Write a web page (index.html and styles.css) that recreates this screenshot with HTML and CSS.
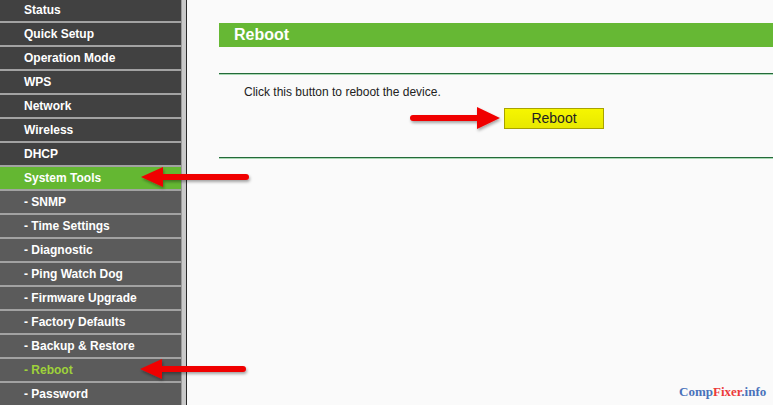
FILE: index.html
```html
<!DOCTYPE html>
<html>
<head>
<meta charset="utf-8">
<link rel="stylesheet" href="styles.css">
</head>
<body>
<div class="page">
  <nav class="sidebar">
    <ul class="menu">
      <li class="item main">Status</li>
      <li class="item main">Quick Setup</li>
      <li class="item main">Operation Mode</li>
      <li class="item main">WPS</li>
      <li class="item main">Network</li>
      <li class="item main">Wireless</li>
      <li class="item main">DHCP</li>
      <li class="item active">System Tools</li>
      <li class="item sub">- SNMP</li>
      <li class="item sub">- Time Settings</li>
      <li class="item sub">- Diagnostic</li>
      <li class="item sub">- Ping Watch Dog</li>
      <li class="item sub">- Firmware Upgrade</li>
      <li class="item sub">- Factory Defaults</li>
      <li class="item sub">- Backup &amp; Restore</li>
      <li class="item sub current">- Reboot</li>
      <li class="item sub">- Password</li>
    </ul>
    <div class="edge"></div>
  </nav>
  <main class="content">
    <div class="title-bar">Reboot</div>
    <div class="rule rule-top"></div>
    <p class="desc">Click this button to reboot the device.</p>
    <div class="btn-row"><button class="reboot-btn">Reboot</button></div>
    <div class="rule rule-bottom"></div>
  </main>
</div>

<svg class="arrow arrow-left arrow-1" width="120" height="34" viewBox="0 0 120 34">
  <defs>
    <filter id="sh" x="-20%" y="-40%" width="140%" height="180%">
      <feDropShadow dx="1" dy="2" stdDeviation="1.5" flood-color="#000" flood-opacity="0.35"/>
    </filter>
  </defs>
  <g filter="url(#sh)">
    <line x1="24" y1="15" x2="108" y2="15" stroke="#f00000" stroke-width="6" stroke-linecap="round"/>
    <polygon points="3,15 25,5 25,25" fill="#f00000"/>
  </g>
</svg>

<svg class="arrow arrow-left arrow-2" width="120" height="34" viewBox="0 0 120 34">
  <g filter="url(#sh)">
    <line x1="24" y1="15" x2="106" y2="15" stroke="#f00000" stroke-width="6" stroke-linecap="round"/>
    <polygon points="3,15 25,5 25,25" fill="#f00000"/>
  </g>
</svg>

<svg class="arrow arrow-3" width="100" height="36" viewBox="0 0 100 36">
  <g filter="url(#sh)">
    <line x1="6" y1="16" x2="72" y2="16" stroke="#f00000" stroke-width="6" stroke-linecap="round"/>
    <polygon points="93,16 70,5 70,27" fill="#f00000"/>
  </g>
</svg>

<div class="watermark"><span class="wm-blue">Comp</span><span class="wm-red">Fixer</span><span class="wm-blue">.info</span></div>
</body>
</html>
```

FILE: styles.css
```css
html, body {
  margin: 0;
  padding: 0;
  width: 773px;
  height: 405px;
  overflow: hidden;
  background: #fafafa;
}

.page {
  display: flex;
  height: 405px;
  font-family: "Liberation Sans", Arial, sans-serif;
}

.sidebar {
  display: flex;
  flex: 0 0 187px;
  height: 405px;
  overflow: hidden;
}

.menu {
  list-style: none;
  margin: -1px 0 0 0;
  padding: 0;
  width: 181px;
  background: #a2a2a2;
}

.item {
  height: 22px;
  line-height: 22px;
  margin-bottom: 2px;
  padding-left: 24px;
  color: #ffffff;
  font-weight: bold;
  font-size: 12px;
  white-space: nowrap;
}

.main { background: #414141; }
.active { background: #64b732; }
.sub { background: #5b5b5b; }
.current { color: #9fd23a; }

.edge {
  width: 5px;
  background: #c9c9c9;
  border-left: 1px solid #9a9a9a;
  border-right: 1px solid #2a2a2a;
  box-sizing: border-box;
  width: 6px;
}

.content {
  flex: 1;
  padding: 23px 0 0 32px;
  color: #222;
}

.title-bar {
  height: 24px;
  line-height: 24px;
  background: #66b834;
  color: #ffffff;
  font-weight: bold;
  font-size: 16px;
  padding-left: 15px;
}

.rule {
  height: 1px;
  background: #246a3a;
  border-bottom: 1px solid #a9d9b4;
}

.rule-top { margin-top: 26px; }

.desc {
  margin: 10px 0 0 25px;
  font-size: 12px;
  line-height: 14px;
}

.btn-row {
  padding-left: 285px;
  margin-top: 9px;
}

.reboot-btn {
  display: block;
  width: 100px;
  height: 21px;
  padding: 0;
  border: 1px solid #a8a200;
  background: linear-gradient(#f6f600, #e8e800);
  font-family: "Liberation Sans", Arial, sans-serif;
  font-size: 14px;
  color: #222;
  line-height: 19px;
}

.rule-bottom { margin-top: 28px; }

.arrow { position: absolute; }
.arrow-1 { left: 138px; top: 162px; }
.arrow-2 { left: 137px; top: 354px; }
.arrow-3 { left: 407px; top: 102px; }

.watermark {
  position: absolute;
  left: 679px;
  top: 384px;
  font-family: "Liberation Serif", "Times New Roman", serif;
  font-weight: bold;
  font-size: 13px;
  line-height: 16px;
}

.wm-blue { color: #4a72bb; }
.wm-red { color: #ec3a3a; }
```
